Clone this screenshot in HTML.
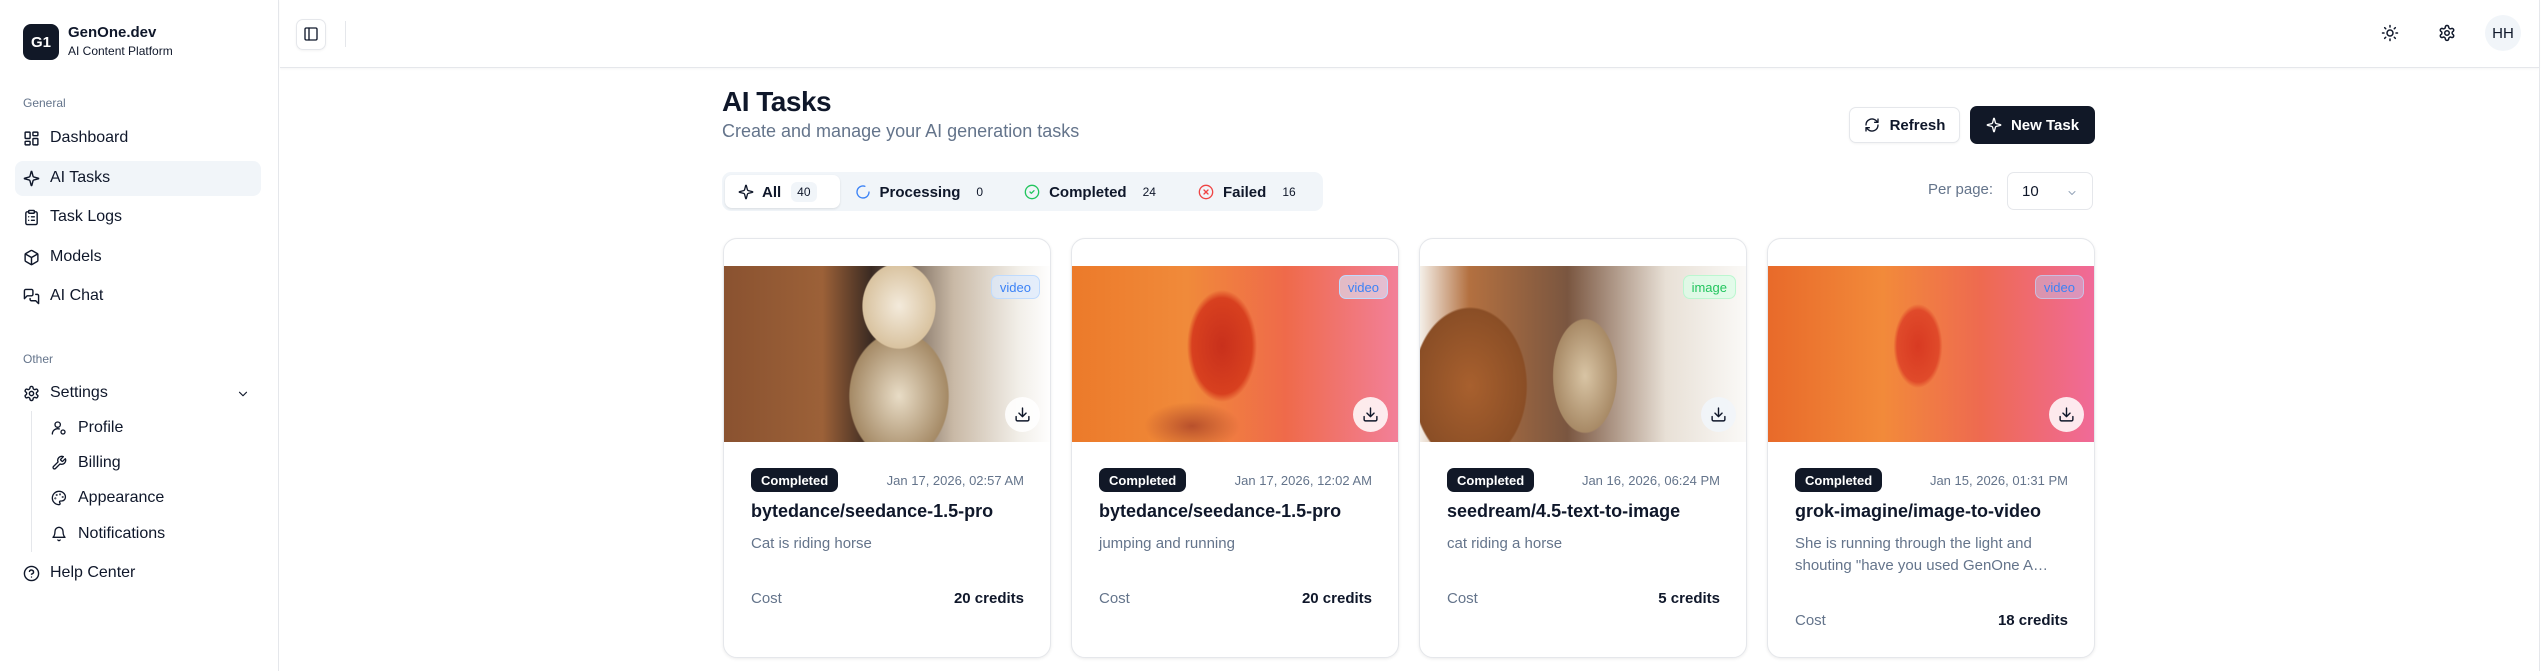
<!DOCTYPE html>
<html><head><meta charset="utf-8"><style>
*{box-sizing:border-box;margin:0;padding:0}
body{width:2542px;height:671px;overflow:hidden;background:#fff;font-family:"Liberation Sans",sans-serif;color:#0f172a;position:relative}
.sb{position:absolute;left:0;top:0;width:279px;height:671px;background:#fff;border-right:1px solid #e5e7eb}
.logo{position:absolute;left:23px;top:24px;width:36px;height:36px;border-radius:8px;background:#111827;color:#fff;font-weight:bold;font-size:15px;display:flex;align-items:center;justify-content:center}
.brand{position:absolute;left:68px;top:24px;font-size:15px;font-weight:bold}
.brand2{position:absolute;left:68px;top:44px;font-size:12px;color:#0f172a}
.grp{position:absolute;left:23px;font-size:12px;color:#64748b}
.ni{position:absolute;left:23px;font-size:16px;display:flex;align-items:center;height:20px}
.ni svg{width:17px;height:17px;margin-right:10px;stroke:#0f172a;fill:none;stroke-width:2;stroke-linecap:round;stroke-linejoin:round}
.sub{left:51px}
.sub svg{width:16px;height:16px;margin-right:11px}
.act{position:absolute;left:15px;top:161px;width:246px;height:35px;background:#f1f5f9;border-radius:8px}
.hdr{position:absolute;left:280px;top:0;width:2259px;height:68px;border-bottom:1px solid #e5e7eb;box-shadow:0 1px 2px rgba(0,0,0,.04)}
.rb{position:absolute;right:0;top:0;width:3px;height:671px;border-left:1px solid #e5e7eb}
.ic{position:absolute;stroke:#0f172a;fill:none;stroke-width:2;stroke-linecap:round;stroke-linejoin:round}
.btn{position:absolute;border-radius:7px;font-size:15px;display:flex;align-items:center;justify-content:center;font-weight:600}
.card{position:absolute;top:238px;width:328px;height:420px;border:1px solid #e5e7eb;border-radius:14px;box-shadow:0 1px 3px rgba(0,0,0,.08);overflow:hidden;background:#fff}
.img{position:absolute;left:0;top:27px;width:328px;height:176px}
.tag{position:absolute;right:10px;top:9px;height:24px;padding:0 8px;border-radius:7px;font-size:13px;display:flex;align-items:center}
.dl{position:absolute;right:10px;top:131px;width:35px;height:35px;border-radius:50%;background:rgba(255,255,255,.85);display:flex;align-items:center;justify-content:center}
.st{position:absolute;left:27px;top:229px;height:24px;padding:0 10px;background:#111827;color:#fff;border-radius:7px;font-size:13px;display:flex;align-items:center;font-weight:600}
.dt{position:absolute;right:26px;top:234px;font-size:13px;color:#64748b}
.tt{position:absolute;left:27px;top:262px;font-size:18px;font-weight:600}
.ds{position:absolute;left:27px;top:294px;width:275px;font-size:15px;color:#64748b;line-height:22px}
.cl{position:absolute;left:27px;font-size:15px;color:#64748b}
.cr{position:absolute;right:26px;font-size:15px;font-weight:600}
</style></head><body>
<div class="sb">
<div class="logo">G1</div><div class="brand">GenOne.dev</div><div class="brand2">AI Content Platform</div>
<div class="grp" style="top:96px">General</div>
<div class="act"></div>
<div class="ni" style="top:128px"><svg viewBox="0 0 24 24"><rect x="3" y="3" width="7" height="9" rx="1"/><rect x="14" y="3" width="7" height="5" rx="1"/><rect x="14" y="12" width="7" height="9" rx="1"/><rect x="3" y="16" width="7" height="5" rx="1"/></svg>Dashboard</div>
<div class="ni" style="top:168px"><svg viewBox="0 0 24 24"><path d="M9.9 15.5a2 2 0 0 0-1.4-1.4L2.4 12.5a.5.5 0 0 1 0-1l6.1-1.6a2 2 0 0 0 1.4-1.4l1.6-6.1a.5.5 0 0 1 1 0l1.6 6.1a2 2 0 0 0 1.4 1.4l6.1 1.6a.5.5 0 0 1 0 1l-6.1 1.6a2 2 0 0 0-1.4 1.4l-1.6 6.1a.5.5 0 0 1-1 0z"/></svg>AI Tasks</div>
<div class="ni" style="top:207px"><svg viewBox="0 0 24 24"><rect x="8" y="2" width="8" height="4" rx="1"/><path d="M16 4h2a2 2 0 0 1 2 2v14a2 2 0 0 1-2 2H6a2 2 0 0 1-2-2V6a2 2 0 0 1 2-2h2M12 11h4M12 16h4M8 11h.01M8 16h.01"/></svg>Task Logs</div>
<div class="ni" style="top:247px"><svg viewBox="0 0 24 24"><path d="M21 8a2 2 0 0 0-1-1.7l-7-4a2 2 0 0 0-2 0l-7 4A2 2 0 0 0 3 8v8a2 2 0 0 0 1 1.7l7 4a2 2 0 0 0 2 0l7-4a2 2 0 0 0 1-1.7z"/><path d="M3.3 7 12 12l8.7-5M12 22V12"/></svg>Models</div>
<div class="ni" style="top:286px"><svg viewBox="0 0 24 24"><path d="M14 9a2 2 0 0 1-2 2H6l-4 4V4a2 2 0 0 1 2-2h8a2 2 0 0 1 2 2z"/><path d="M18 9h2a2 2 0 0 1 2 2v11l-4-4h-6a2 2 0 0 1-2-2v-1"/></svg>AI Chat</div>
<div class="grp" style="top:352px">Other</div>
<div class="ni" style="top:383px"><svg viewBox="0 0 24 24"><circle cx="12" cy="12" r="3"/><path d="M12.2 2h-.4a2 2 0 0 0-2 2v.2a2 2 0 0 1-1 1.7l-.4.3a2 2 0 0 1-2 0l-.2-.1a2 2 0 0 0-2.7.7l-.2.4a2 2 0 0 0 .7 2.7l.2.1a2 2 0 0 1 1 1.7v.5a2 2 0 0 1-1 1.7l-.2.1a2 2 0 0 0-.7 2.7l.2.4a2 2 0 0 0 2.7.7l.2-.1a2 2 0 0 1 2 0l.4.3a2 2 0 0 1 1 1.7v.2a2 2 0 0 0 2 2h.4a2 2 0 0 0 2-2v-.2a2 2 0 0 1 1-1.7l.4-.3a2 2 0 0 1 2 0l.2.1a2 2 0 0 0 2.7-.7l.2-.4a2 2 0 0 0-.7-2.7l-.2-.1a2 2 0 0 1-1-1.7v-.5a2 2 0 0 1 1-1.7l.2-.1a2 2 0 0 0 .7-2.7l-.2-.4a2 2 0 0 0-2.7-.7l-.2.1a2 2 0 0 1-2 0l-.4-.3a2 2 0 0 1-1-1.7V4a2 2 0 0 0-2-2z"/></svg>Settings</div>
<svg class="ic" style="left:236px;top:387px" width="14" height="14" viewBox="0 0 24 24"><path d="m6 9 6 6 6-6"/></svg>
<div style="position:absolute;left:31px;top:411px;width:1px;height:141px;background:#e5e7eb"></div>
<div class="ni sub" style="top:418px"><svg viewBox="0 0 24 24"><circle cx="10" cy="7" r="4"/><path d="M2 21a8 8 0 0 1 10.4-7.6"/><circle cx="18" cy="18" r="3"/></svg>Profile</div>
<div class="ni sub" style="top:453px"><svg viewBox="0 0 24 24"><path d="M14.7 6.3a1 1 0 0 0 0 1.4l1.6 1.6a1 1 0 0 0 1.4 0l3.8-3.8a6 6 0 0 1-7.9 7.9l-6.9 6.9a2.1 2.1 0 0 1-3-3l6.9-6.9a6 6 0 0 1 7.9-7.9z"/></svg>Billing</div>
<div class="ni sub" style="top:488px"><svg viewBox="0 0 24 24"><circle cx="13.5" cy="6.5" r=".5"/><circle cx="17.5" cy="10.5" r=".5"/><circle cx="8.5" cy="7.5" r=".5"/><circle cx="6.5" cy="12.5" r=".5"/><path d="M12 2C6.5 2 2 6.5 2 12s4.5 10 10 10c.9 0 1.6-.7 1.6-1.7 0-.4-.2-.8-.4-1.1-.3-.3-.4-.6-.4-1.1a1.6 1.6 0 0 1 1.6-1.6H16c3.1 0 5.6-2.5 5.6-5.6C21.900 6 17.5 2 12 2z"/></svg>Appearance</div>
<div class="ni sub" style="top:524px"><svg viewBox="0 0 24 24"><path d="M6 8a6 6 0 0 1 12 0c0 7 3 9 3 9H3s3-2 3-9M10.3 21a1.9 1.9 0 0 0 3.4 0"/></svg>Notifications</div>
<div class="ni" style="top:563px"><svg viewBox="0 0 24 24"><circle cx="12" cy="12" r="10"/><path d="M9.1 9a3 3 0 0 1 5.8 1c0 2-3 3-3 3M12 17h.01"/></svg>Help Center</div>
</div>
<div class="hdr"></div>
<div class="rb"></div>
<div style="position:absolute;left:296px;top:19px;width:30px;height:31px;border:1px solid #e5e7eb;border-radius:7px;box-shadow:0 1px 2px rgba(0,0,0,.05)"></div>
<svg class="ic" style="left:303px;top:26px" width="16" height="16" viewBox="0 0 24 24"><rect x="3" y="3" width="18" height="18" rx="2"/><path d="M9 3v18"/></svg>
<div style="position:absolute;left:345px;top:21px;width:1px;height:26px;background:#e5e7eb"></div>
<svg class="ic" style="left:2381px;top:24px" width="18" height="18" viewBox="0 0 24 24"><circle cx="12" cy="12" r="4"/><path d="M12 2v2M12 20v2M4.9 4.9l1.4 1.4M17.7 17.7l1.4 1.4M2 12h2M20 12h2M6.3 17.7l-1.4 1.4M19.1 4.9l-1.4 1.4"/></svg>
<svg class="ic" style="left:2438px;top:24px" width="18" height="18" viewBox="0 0 24 24"><circle cx="12" cy="12" r="3"/><path d="M12.2 2h-.4a2 2 0 0 0-2 2v.2a2 2 0 0 1-1 1.7l-.4.3a2 2 0 0 1-2 0l-.2-.1a2 2 0 0 0-2.7.7l-.2.4a2 2 0 0 0 .7 2.7l.2.1a2 2 0 0 1 1 1.7v.5a2 2 0 0 1-1 1.7l-.2.1a2 2 0 0 0-.7 2.7l.2.4a2 2 0 0 0 2.7.7l.2-.1a2 2 0 0 1 2 0l.4.3a2 2 0 0 1 1 1.7v.2a2 2 0 0 0 2 2h.4a2 2 0 0 0 2-2v-.2a2 2 0 0 1 1-1.7l.4-.3a2 2 0 0 1 2 0l.2.1a2 2 0 0 0 2.7-.7l.2-.4a2 2 0 0 0-.7-2.7l-.2-.1a2 2 0 0 1-1-1.7v-.5a2 2 0 0 1 1-1.7l.2-.1a2 2 0 0 0 .7-2.7l-.2-.4a2 2 0 0 0-2.7-.7l-.2.1a2 2 0 0 1-2 0l-.4-.3a2 2 0 0 1-1-1.7V4a2 2 0 0 0-2-2z"/></svg>
<div style="position:absolute;left:2485px;top:15px;width:36px;height:36px;border-radius:50%;background:#f1f5f9;font-size:15px;display:flex;align-items:center;justify-content:center">HH</div>

<div style="position:absolute;left:722px;top:86px;font-size:28px;font-weight:bold;letter-spacing:-.5px">AI Tasks</div>
<div style="position:absolute;left:722px;top:121px;font-size:18px;color:#64748b">Create and manage your AI generation tasks</div>
<div class="btn" style="left:1849px;top:107px;width:111px;height:36px;border:1px solid #e5e7eb;background:#fff;box-shadow:0 1px 2px rgba(0,0,0,.05)"><svg class="ic" style="position:static;margin-right:10px" width="16" height="16" viewBox="0 0 24 24"><path d="M3 12a9 9 0 0 1 15-6.7L21 8M21 3v5h-5M21 12a9 9 0 0 1-15 6.7L3 16M8 16H3v5"/></svg>Refresh</div>
<div class="btn" style="left:1970px;top:106px;width:125px;height:38px;background:#111827;color:#fff"><svg class="ic" style="position:static;margin-right:9px;stroke:#fff" width="16" height="16" viewBox="0 0 24 24"><path d="M9.9 15.5a2 2 0 0 0-1.4-1.4L2.4 12.5a.5.5 0 0 1 0-1l6.1-1.6a2 2 0 0 0 1.4-1.4l1.6-6.1a.5.5 0 0 1 1 0l1.6 6.1a2 2 0 0 0 1.4 1.4l6.1 1.6a.5.5 0 0 1 0 1l-6.1 1.6a2 2 0 0 0-1.4 1.4l-1.6 6.1a.5.5 0 0 1-1 0z"/></svg>New Task</div>

<div style="position:absolute;left:722px;top:172px;width:601px;height:39px;background:#f1f5f9;border-radius:9px"></div>
<div style="position:absolute;left:725px;top:175px;width:115px;height:33px;background:#fff;border-radius:7px;box-shadow:0 1px 2px rgba(0,0,0,.1)"></div>
<div style="position:absolute;left:738px;top:182px;font-size:15px;display:flex;align-items:center;font-weight:600">
<svg class="ic" style="position:static;margin-right:8px" width="16" height="16" viewBox="0 0 24 24"><path d="M9.9 15.5a2 2 0 0 0-1.4-1.4L2.4 12.5a.5.5 0 0 1 0-1l6.1-1.6a2 2 0 0 0 1.4-1.4l1.6-6.1a.5.5 0 0 1 1 0l1.6 6.1a2 2 0 0 0 1.4 1.4l6.1 1.6a.5.5 0 0 1 0 1l-6.1 1.6a2 2 0 0 0-1.4 1.4l-1.6 6.1a.5.5 0 0 1-1 0z"/></svg>All<span style="margin-left:10px;background:#f1f5f9;border-radius:6px;padding:3px 6px;font-size:12px;font-weight:normal">40</span>
<svg class="ic" style="position:static;margin:0 9px 0 38px;stroke:#3b82f6" width="16" height="16" viewBox="0 0 24 24"><path d="M21 12a9 9 0 1 1-6.2-8.6"/></svg>Processing<span style="margin-left:16px;font-size:12px;font-weight:normal">0</span>
<svg class="ic" style="position:static;margin:0 9px 0 41px;stroke:#22c55e" width="16" height="16" viewBox="0 0 24 24"><circle cx="12" cy="12" r="10"/><path d="m9 12 2 2 4-4"/></svg>Completed<span style="margin-left:16px;font-size:12px;font-weight:normal">24</span>
<svg class="ic" style="position:static;margin:0 9px 0 42px;stroke:#ef4444" width="16" height="16" viewBox="0 0 24 24"><circle cx="12" cy="12" r="10"/><path d="m15 9-6 6M9 9l6 6"/></svg>Failed<span style="margin-left:16px;font-size:12px;font-weight:normal">16</span>
</div>
<div style="position:absolute;left:1928px;top:181px;font-size:15px;color:#64748b">Per page:</div>
<div style="position:absolute;left:2007px;top:172px;width:86px;height:38px;border:1px solid #e5e7eb;border-radius:7px;font-size:15px;padding:10px 0 0 14px">10<svg class="ic" style="left:58px;top:14px;stroke:#94a3b8" width="12" height="12" viewBox="0 0 24 24"><path d="m6 9 6 6 6-6"/></svg></div>

<div class="card" style="left:723px">
<div class="img" style="background:radial-gradient(ellipse 60px 70px at 175px 40px,#f3eadb 0,#d9c3a0 60%,transparent 62%),radial-gradient(ellipse 70px 90px at 175px 130px,#e8dcc6 0,#a58a66 70%,transparent 72%),linear-gradient(90deg,#8a5230 0,#9c6138 30%,#3a2a22 45%,#c9b9a6 70%,#f2efe9 90%,#fff 100%)"></div>
<div class="tag" style="top:36px;color:#3b82f6;background:rgba(219,234,254,.7);border:1px solid #bfdbfe">video</div>
<div class="dl" style="top:158px"><svg class="ic" style="position:static" width="17" height="17" viewBox="0 0 24 24"><path d="M12 15V3M21 15v4a2 2 0 0 1-2 2H5a2 2 0 0 1-2-2v-4M7 10l5 5 5-5"/></svg></div>
<div class="st">Completed</div><div class="dt">Jan 17, 2026, 02:57 AM</div>
<div class="tt">bytedance/seedance-1.5-pro</div><div class="ds">Cat is riding horse</div>
<div class="cl" style="top:351px">Cost</div><div class="cr" style="top:351px">20 credits</div>
</div>
<div class="card" style="left:1071px">
<div class="img" style="background:radial-gradient(ellipse 50px 80px at 150px 80px,#c8301c 0,#d8401f 60%,transparent 70%),radial-gradient(ellipse 60px 30px at 120px 160px,#b8502c 0,transparent 80%),linear-gradient(90deg,#ec7a2a 0,#f08a3a 35%,#ef6a4a 65%,#f2809a 100%)"></div>
<div class="tag" style="top:36px;color:#3b82f6;background:rgba(219,234,254,.6);border:1px solid #bfdbfe">video</div>
<div class="dl" style="top:158px"><svg class="ic" style="position:static" width="17" height="17" viewBox="0 0 24 24"><path d="M12 15V3M21 15v4a2 2 0 0 1-2 2H5a2 2 0 0 1-2-2v-4M7 10l5 5 5-5"/></svg></div>
<div class="st">Completed</div><div class="dt">Jan 17, 2026, 12:02 AM</div>
<div class="tt">bytedance/seedance-1.5-pro</div><div class="ds">jumping and running</div>
<div class="cl" style="top:351px">Cost</div><div class="cr" style="top:351px">20 credits</div>
</div>
<div class="card" style="left:1419px">
<div class="img" style="background:radial-gradient(ellipse 45px 80px at 165px 110px,#d8c4a4 0,#a88a66 70%,transparent 72%),radial-gradient(ellipse 80px 110px at 50px 120px,#a8602e 0,#8a4e26 70%,transparent 72%),linear-gradient(90deg,#f4efe8 0,#b37040 15%,#7a5640 45%,#e8e0d6 75%,#fbfaf8 100%)"></div>
<div class="tag" style="top:36px;color:#22c55e;background:rgba(220,252,231,.8);border:1px solid #bbf7d0">image</div>
<div class="dl" style="top:158px;background:rgba(241,245,249,.9)"><svg class="ic" style="position:static" width="17" height="17" viewBox="0 0 24 24"><path d="M12 15V3M21 15v4a2 2 0 0 1-2 2H5a2 2 0 0 1-2-2v-4M7 10l5 5 5-5"/></svg></div>
<div class="st">Completed</div><div class="dt">Jan 16, 2026, 06:24 PM</div>
<div class="tt">seedream/4.5-text-to-image</div><div class="ds">cat riding a horse</div>
<div class="cl" style="top:351px">Cost</div><div class="cr" style="top:351px">5 credits</div>
</div>
<div class="card" style="left:1767px">
<div class="img" style="background:radial-gradient(ellipse 35px 60px at 150px 80px,#d83a22 0,#e04a2a 60%,transparent 70%),linear-gradient(90deg,#e86a2a 0,#f28a3a 35%,#ee6a50 65%,#f06a9a 100%)"></div>
<div class="tag" style="top:36px;color:#3b82f6;background:rgba(200,190,230,.5);border:1px solid rgba(191,219,254,.6)">video</div>
<div class="dl" style="top:158px"><svg class="ic" style="position:static" width="17" height="17" viewBox="0 0 24 24"><path d="M12 15V3M21 15v4a2 2 0 0 1-2 2H5a2 2 0 0 1-2-2v-4M7 10l5 5 5-5"/></svg></div>
<div class="st">Completed</div><div class="dt">Jan 15, 2026, 01:31 PM</div>
<div class="tt">grok-imagine/image-to-video</div><div class="ds">She is running through the light and shouting "have you used GenOne A…</div>
<div class="cl" style="top:373px">Cost</div><div class="cr" style="top:373px">18 credits</div>
</div>
</body></html>
